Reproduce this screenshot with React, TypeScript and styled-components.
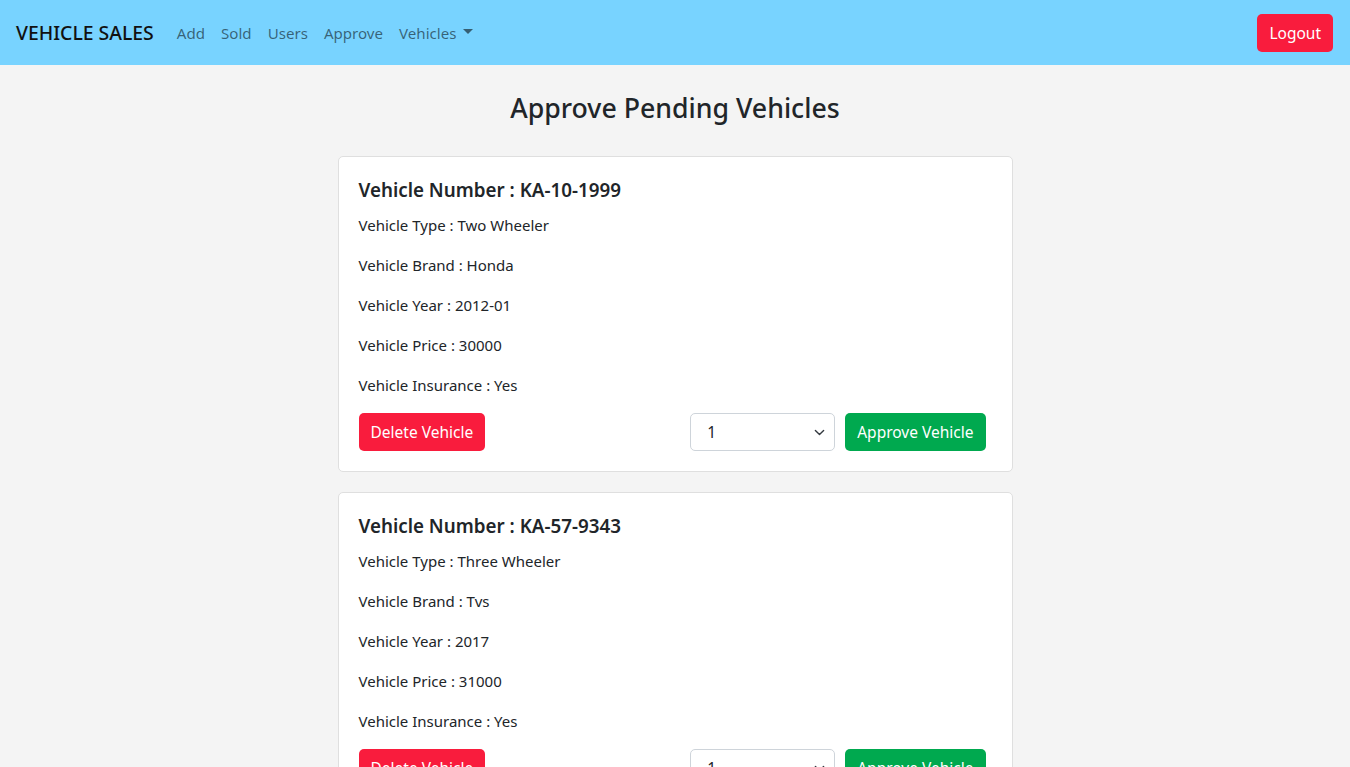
import styled, { createGlobalStyle } from 'styled-components';

const GlobalStyle = createGlobalStyle`
    * {
        box-sizing: border-box;
    }
    body {
        margin: 0;
        background: #f4f4f4;
        color: #212529;
        font-family: "Noto Sans", "Open Sans", sans-serif;
        font-size: 16px;
    }
`

interface Vehicle {
    number: string;
    type: string;
    brand: string;
    year: string;
    price: number;
    insurance: string;
}

const vehicles: Vehicle[] = [
    { number: 'KA-10-1999', type: 'Two Wheeler', brand: 'Honda', year: '2012-01', price: 30000, insurance: 'Yes' },
    { number: 'KA-57-9343', type: 'Three Wheeler', brand: 'Tvs', year: '2017', price: 31000, insurance: 'Yes' },
];

const navLinks = ['Add', 'Sold', 'Users', 'Approve'];

const App: React.FC = () => {
    return (
        <>
            <GlobalStyle />
            <Navbar>
                <NavLeft>
                    <Brand>VEHICLE SALES</Brand>
                    { navLinks.map((link) => <NavLink key={ link }>{ link }</NavLink>) }
                    <NavLink>
                        Vehicles <Caret />
                    </NavLink>
                </NavLeft>
                <Button $variant="danger">Logout</Button>
            </Navbar>

            <Main>
                <Heading>Approve Pending Vehicles</Heading>
                { vehicles.map((v) => (
                    <Card key={ v.number }>
                        <CardTitle>Vehicle Number : { v.number }</CardTitle>
                        <Detail>Vehicle Type : { v.type }</Detail>
                        <Detail>Vehicle Brand : { v.brand }</Detail>
                        <Detail>Vehicle Year : { v.year }</Detail>
                        <Detail>Vehicle Price : { v.price }</Detail>
                        <Detail>Vehicle Insurance : { v.insurance }</Detail>
                        <Actions>
                            <Button $variant="danger">Delete Vehicle</Button>
                            <ApproveGroup>
                                <SelectWrap>
                                    <Select defaultValue="1">
                                        <option value="1">1</option>
                                        <option value="2">2</option>
                                        <option value="3">3</option>
                                    </Select>
                                    <Chevron viewBox="0 0 16 16">
                                        <path d="M2 5l6 6 6-6" fill="none" stroke="#343a40" strokeWidth="2" strokeLinecap="round" strokeLinejoin="round" />
                                    </Chevron>
                                </SelectWrap>
                                <Button $variant="success">Approve Vehicle</Button>
                            </ApproveGroup>
                        </Actions>
                    </Card>
                )) }
            </Main>
        </>
    );
}

const Navbar = styled.nav`
    height: 65px;
    background: #78d3ff;
    display: flex;
    align-items: center;
    justify-content: space-between;
    padding: 0 17px 0 16px;
`

const NavLeft = styled.div`
    display: flex;
    align-items: center;
`

const Brand = styled.span`
    font-size: 19.4px;
    font-weight: 500;
    color: #111;
    margin-right: 15px;
`

const NavLink = styled.span`
    display: flex;
    align-items: center;
    gap: 7px;
    padding: 8px;
    font-size: 15.1px;
    color: rgba(0, 0, 0, 0.55);
`

const Caret = styled.span`
    width: 0;
    height: 0;
    border-left: 5px solid transparent;
    border-right: 5px solid transparent;
    border-top: 5px solid rgba(0, 0, 0, 0.55);
    margin-top: -2px;
`

const Button = styled.button<{ $variant: 'danger' | 'success' }>`
    height: 38px;
    padding: 0 12px;
    border: none;
    border-radius: 5px;
    font-family: inherit;
    font-size: 15.5px;
    color: #fff;
    background: ${ (p) => p.$variant === 'danger' ? '#f91c3d' : '#00a94f' };
    cursor: pointer;
`

const Main = styled.main`
    width: 675px;
    margin: 0 auto;
    padding: 27px 0 20px;
`

const Heading = styled.h2`
    margin: 0 0 32px;
    text-align: center;
    font-size: 26.7px;
    font-weight: 500;
    line-height: 32px;
`

const Card = styled.div`
    background: #fff;
    border: 1px solid #dfdfdf;
    border-radius: 5px;
    padding: 21px 20px 20px;
    margin-bottom: 20px;
`

const CardTitle = styled.h5`
    margin: 0 0 11px;
    font-size: 18.8px;
    font-weight: 600;
    line-height: 24px;
`

const Detail = styled.p`
    margin: 0 0 16px;
    font-size: 15px;
    line-height: 24px;
`

const Actions = styled.div`
    display: flex;
    justify-content: space-between;
    align-items: center;
`

const ApproveGroup = styled.div`
    display: flex;
    gap: 10px;
    padding-right: 6px;
`

const SelectWrap = styled.div`
    position: relative;
    width: 145px;
`

const Select = styled.select`
    width: 100%;
    height: 38px;
    appearance: none;
    border: 1px solid #ced4da;
    border-radius: 5px;
    background: #fff;
    padding: 0 32px 0 16px;
    font-family: inherit;
    font-size: 15.5px;
    color: #212529;
`

const Chevron = styled.svg`
    position: absolute;
    right: 10px;
    top: 14px;
    width: 11px;
    height: 11px;
    pointer-events: none;
`

export default App;
